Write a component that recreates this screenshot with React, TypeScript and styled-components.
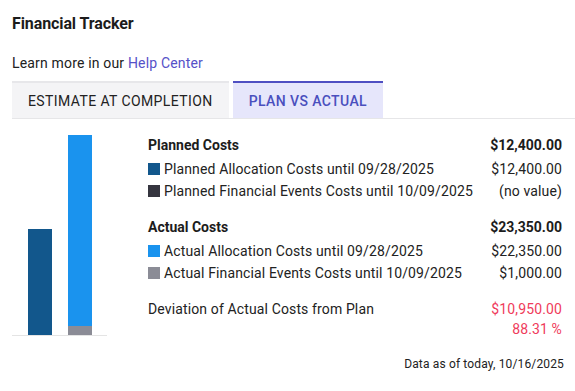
import React from "react";
import styled, { createGlobalStyle } from "styled-components";

const GlobalStyle = createGlobalStyle`
  html, body {
    margin: 0;
    padding: 0;
    background: #ffffff;
  }
  body {
    font-family: Roboto, "Liberation Sans", Arial, sans-serif;
    color: #212121;
  }
`;

const Page = styled.div`
  padding: 14px 0 0 12px;
  width: 575px;
  box-sizing: border-box;
`;

const Title = styled.div`
  font-size: 16px;
  font-weight: 700;
  line-height: 20px;
  letter-spacing: -0.1px;
  color: #1c1c1c;
`;

const Learn = styled.div`
  margin-top: 19px;
  font-size: 14px;
  line-height: 20px;
  letter-spacing: 0.17px;
  color: #212121;
`;

const Link = styled.a`
  color: #5651c8;
  text-decoration: none;
`;

const Tabs = styled.div`
  margin-top: 8px;
  display: flex;
  gap: 4px;
  border-bottom: 1px solid #e6e6e8;
`;

const Tab = styled.div<{ $active?: boolean }>`
  height: 35px;
  padding: 0 16px;
  display: flex;
  align-items: center;
  font-size: 14px;
  letter-spacing: 0.4px;
  border-top: 2px solid ${p => (p.$active ? "#4f4fc2" : "#e7e7ea")};
  background: ${p => (p.$active ? "#e6e6fb" : "#f4f4f6")};
  color: ${p => (p.$active ? "#4a4fbe" : "#222222")};
  font-weight: ${p => (p.$active ? 500 : 400)};
`;

const Content = styled.div`
  display: flex;
  padding: 15px 13px 0 0;
`;

const Chart = styled.div`
  width: 95px;
  height: 202px;
  margin-right: 41px;
  padding-left: 16px;
  box-sizing: border-box;
  display: flex;
  align-items: flex-end;
  gap: 16px;
  border-bottom: 1px solid #e4e4e4;
  flex-shrink: 0;
`;

const Bar = styled.div`
  width: 24px;
  display: flex;
  flex-direction: column;
`;

const Segment = styled.div<{ $color: string }>`
  background: ${p => p.$color};
`;

const Table = styled.div`
  flex: 1;
  display: flex;
  flex-direction: column;
`;

const Row = styled.div<{ $head?: boolean; $gap?: number; $h?: number }>`
  display: flex;
  justify-content: space-between;
  align-items: center;
  height: ${p => p.$h ?? 22}px;
  margin-top: ${p => p.$gap ?? 0}px;
  font-size: 14px;
  letter-spacing: ${p => (p.$head ? 0 : 0.13)}px;
  font-weight: ${p => (p.$head ? 700 : 400)};
  color: ${p => (p.$head ? "#1c1c1c" : "#222222")};
`;

const Label = styled.span`
  display: flex;
  align-items: center;
`;

const Swatch = styled.span<{ $color: string }>`
  width: 12px;
  height: 12px;
  margin-right: 4px;
  background: ${p => p.$color};
`;

const Red = styled.span`
  color: #ef3b5b;
`;

const Footer = styled.div`
  margin-top: 18px;
  padding-right: 11px;
  text-align: right;
  font-size: 12px;
  line-height: 16px;
  letter-spacing: 0.15px;
  color: #222222;
`;

const DARK_BLUE = "#12578c";
const NAVY = "#35353f";
const BLUE = "#1a93ee";
const GREY = "#8b8c96";

const scale = 200 / 23350;

export default function App() {
  return (
    <Page>
      <GlobalStyle />
      <Title>Financial Tracker</Title>
      <Learn>
        Learn more in our <Link href="#">Help Center</Link>
      </Learn>
      <Tabs>
        <Tab>ESTIMATE AT COMPLETION</Tab>
        <Tab $active>PLAN VS ACTUAL</Tab>
      </Tabs>
      <Content>
        <Chart>
          <Bar>
            <Segment $color={DARK_BLUE} style={{ height: Math.round(12400 * scale) }} />
          </Bar>
          <Bar>
            <Segment $color={BLUE} style={{ height: Math.round(22350 * scale) }} />
            <Segment $color={GREY} style={{ height: Math.round(1000 * scale) }} />
          </Bar>
        </Chart>
        <Table>
          <Row $head>
            <span>Planned Costs</span>
            <span>$12,400.00</span>
          </Row>
          <Row $gap={2}>
            <Label>
              <Swatch $color={DARK_BLUE} />
              Planned Allocation Costs until 09/28/2025
            </Label>
            <span>$12,400.00</span>
          </Row>
          <Row>
            <Label>
              <Swatch $color={NAVY} />
              Planned Financial Events Costs until 10/09/2025
            </Label>
            <span>(no value)</span>
          </Row>
          <Row $head $gap={14}>
            <span>Actual Costs</span>
            <span>$23,350.00</span>
          </Row>
          <Row $gap={2}>
            <Label>
              <Swatch $color={BLUE} />
              Actual Allocation Costs until 09/28/2025
            </Label>
            <span>$22,350.00</span>
          </Row>
          <Row>
            <Label>
              <Swatch $color={GREY} />
              Actual Financial Events Costs until 10/09/2025
            </Label>
            <span>$1,000.00</span>
          </Row>
          <Row $gap={14}>
            <span>Deviation of Actual Costs from Plan</span>
            <Red>$10,950.00</Red>
          </Row>
          <Row $h={18}>
            <span />
            <Red>88.31 %</Red>
          </Row>
        </Table>
      </Content>
      <Footer>Data as of today, 10/16/2025</Footer>
    </Page>
  );
}
